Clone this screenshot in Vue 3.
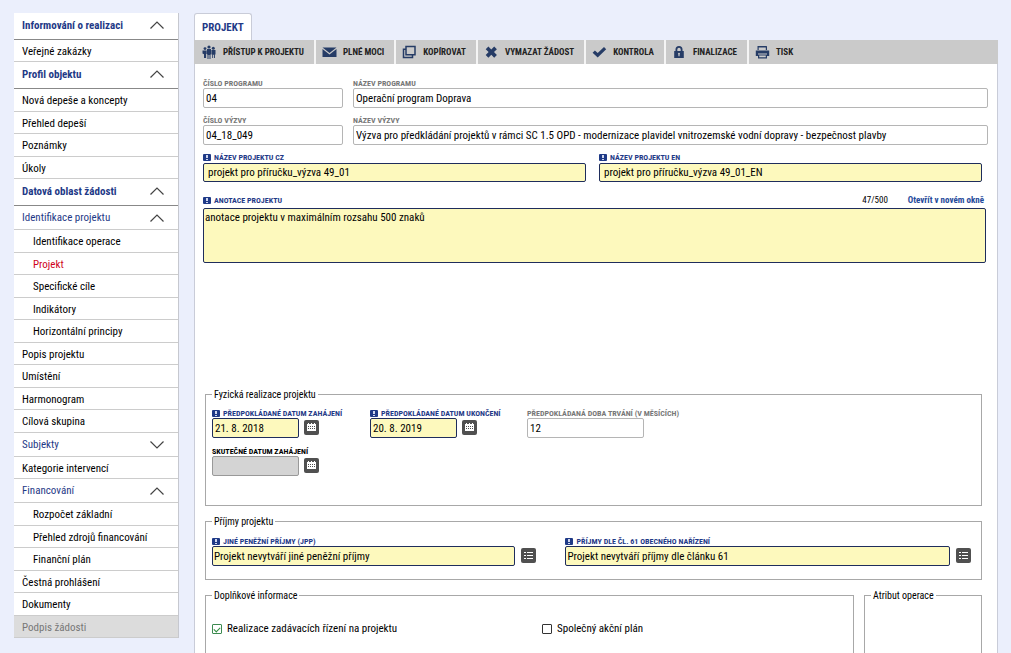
<script setup>
import { ref } from 'vue'

const menu = [
  { label: 'Informování o realizaci', kind: 'section', open: true },
  { label: 'Veřejné zakázky', kind: 'leaf' },
  { label: 'Profil objektu', kind: 'section', open: true },
  { label: 'Nová depeše a koncepty', kind: 'leaf' },
  { label: 'Přehled depeší', kind: 'leaf' },
  { label: 'Poznámky', kind: 'leaf' },
  { label: 'Úkoly', kind: 'leaf' },
  { label: 'Datová oblast žádosti', kind: 'section', open: true },
  { label: 'Identifikace projektu', kind: 'group', open: true },
  { label: 'Identifikace operace', kind: 'leaf', nested: true },
  { label: 'Projekt', kind: 'leaf', nested: true, active: true },
  { label: 'Specifické cíle', kind: 'leaf', nested: true },
  { label: 'Indikátory', kind: 'leaf', nested: true },
  { label: 'Horizontální principy', kind: 'leaf', nested: true },
  { label: 'Popis projektu', kind: 'leaf' },
  { label: 'Umístění', kind: 'leaf' },
  { label: 'Harmonogram', kind: 'leaf' },
  { label: 'Cílová skupina', kind: 'leaf' },
  { label: 'Subjekty', kind: 'group', open: false },
  { label: 'Kategorie intervencí', kind: 'leaf' },
  { label: 'Financování', kind: 'group', open: true },
  { label: 'Rozpočet základní', kind: 'leaf', nested: true },
  { label: 'Přehled zdrojů financování', kind: 'leaf', nested: true },
  { label: 'Finanční plán', kind: 'leaf', nested: true },
  { label: 'Čestná prohlášení', kind: 'leaf' },
  { label: 'Dokumenty', kind: 'leaf' },
  { label: 'Podpis žádosti', kind: 'leaf', disabled: true },
]

const tools = [
  { id: 'people', label: 'PŘÍSTUP K PROJEKTU' },
  { id: 'mail', label: 'PLNÉ MOCI' },
  { id: 'copy', label: 'KOPÍROVAT' },
  { id: 'cross', label: 'VYMAZAT ŽÁDOST' },
  { id: 'check', label: 'KONTROLA' },
  { id: 'lock', label: 'FINALIZACE' },
  { id: 'print', label: 'TISK' },
]

const calendarPath = 'M0 1h1V0h1v1h2V0h1v1h2V0h1v1h1v7H0zM1 3v1h1V3zM3 3v1h1V3zM5 3v1h1V3zM7 3v1h1V3zM1 5v1h1V5zM3 5v1h1V5zM5 5v1h1V5zM7 5v1h1V5z'
const listPath = 'M0 1h2v1H0zM3 1h6v1H3zM0 4h2v1H0zM3 4h6v1H3zM0 7h2v1H0zM3 7h6v1H3z'

const form = ref({
  programNo: '04',
  programName: 'Operační program Doprava',
  callNo: '04_18_049',
  callName: 'Výzva pro předkládání projektů v rámci SC 1.5 OPD - modernizace plavidel vnitrozemské vodní dopravy - bezpečnost plavby',
  nameCz: 'projekt pro příručku_výzva 49_01',
  nameEn: 'projekt pro příručku_výzva 49_01_EN',
  annotation: 'anotace projektu v maximálním rozsahu 500 znaků',
  start: '21. 8. 2018',
  end: '20. 8. 2019',
  duration: '12',
  realStart: '',
  income: 'Projekt nevytváří jiné peněžní příjmy',
  income61: 'Projekt nevytváří příjmy dle článku 61',
  tenders: true,
  actionPlan: false,
})
</script>

<template>
  <div class="page">
    <nav class="side">
      <ul class="menu">
        <li v-for="item in menu" :key="item.label" :class="[item.kind, { nested: item.nested, active: item.active, disabled: item.disabled }]">
          <a v-if="item.kind === 'leaf'" href="#">{{ item.label }}</a>
          <button v-else type="button" :aria-expanded="item.open">
            <span>{{ item.label }}</span>
            <svg width="14" height="8" viewBox="0 0 14 8" aria-hidden="true">
              <path :d="item.open ? 'M.5 7.5 7 1l6.5 6.5' : 'M.5.5 7 7 13.5.5'" />
            </svg>
          </button>
        </li>
      </ul>
    </nav>

    <main class="main">
      <div class="tabs"><a class="tab" href="#">PROJEKT</a></div>
      <div class="toolbar">
        <button v-for="t in tools" :key="t.id" type="button" class="tool">
          <svg v-if="t.id === 'people'" viewBox="0 0 15 14" aria-hidden="true">
            <circle cx="3" cy="3.6" r="1.4" /><circle cx="7" cy="2" r="1.6" /><circle cx="11.3" cy="3.2" r="1.5" />
            <path d="M.5 5.4h4.2V9h-.6v4H2V9.200L.5 8.600zM5 4h4v5.500h-.5V14h-1v-4h-1v4h-1V9.500H5zM9.400 5h4.100v4.500h-.6V13h-.9V9.800h-.9V13h-.9V9.500h-.8z" />
          </svg>
          <svg v-else-if="t.id === 'mail'" viewBox="0 0 15 14" aria-hidden="true">
            <path d="M.5 2.500h14L7.500 8zM.5 4 7.500 9.500l7-5.500v8H.5z" />
          </svg>
          <svg v-else-if="t.id === 'copy'" viewBox="0 0 15 14" class="stroke" aria-hidden="true">
            <path d="M4 1.500h9v8.200H4zM4 4.300H1.500v8.200h9v-2.800" />
          </svg>
          <svg v-else-if="t.id === 'cross'" viewBox="0 0 15 14" aria-hidden="true">
            <path d="m4.400 1.600 2.900 2.900 2.900-2.900 2.700 2.700L10 7.100l2.900 2.900-2.700 2.700-2.900-2.900-2.900 2.900L1.700 10l2.900-2.900-2.900-2.800z" />
          </svg>
          <svg v-else-if="t.id === 'check'" viewBox="0 0 15 14" aria-hidden="true">
            <path d="m.6 7.700 2.300-2.300 2.800 2.700L12 1.900l2.200 2.300-8.500 8.300z" />
          </svg>
          <svg v-else-if="t.id === 'lock'" viewBox="0 0 15 14" aria-hidden="true">
            <path fill-rule="evenodd" d="M3.500 6V4.500a3.500 3.500 0 0 1 7 0V6h1.300v7H2.200V6zM5.300 6h3.400V4.500a1.700 1.700 0 0 0-3.400 0zM7 7.700a1 1 0 0 0-.6 1.800v1.700h1.200V9.500A1 1 0 0 0 7 7.700z" />
          </svg>
          <svg v-else viewBox="0 0 15 14" aria-hidden="true">
            <path fill-rule="evenodd" d="M2.500 1h9l.5.500V5h-1.200V2.500H3.700V5H2.500zM.8 5.500h13.400V11H12V8.500H3V11H.8zM3 9.500h9v4H3zM4.200 10.500v1.700h6.600v-1.700z" />
          </svg>
          <span>{{ t.label }}</span>
        </button>
      </div>

      <form class="form" @submit.prevent>
        <div class="pair">
          <div class="field">
            <label for="programNo">ČÍSLO PROGRAMU</label>
            <input id="programNo" v-model="form.programNo" type="text" readonly>
          </div>
          <div class="field">
            <label for="programName">NÁZEV PROGRAMU</label>
            <input id="programName" v-model="form.programName" type="text" readonly>
          </div>
          <div class="field">
            <label for="callNo">ČÍSLO VÝZVY</label>
            <input id="callNo" v-model="form.callNo" type="text" readonly>
          </div>
          <div class="field">
            <label for="callName">NÁZEV VÝZVY</label>
            <input id="callName" v-model="form.callName" type="text" readonly>
          </div>
        </div>

        <div class="names">
          <div class="field required">
            <label for="nameCz"><i class="mark"></i>NÁZEV PROJEKTU CZ</label>
            <input id="nameCz" v-model="form.nameCz" type="text">
          </div>
          <div class="field required">
            <label for="nameEn"><i class="mark"></i>NÁZEV PROJEKTU EN</label>
            <input id="nameEn" v-model="form.nameEn" type="text">
          </div>
        </div>

        <div class="field required note">
          <div class="note-head">
            <label for="annotation"><i class="mark"></i>ANOTACE PROJEKTU</label>
            <span class="count">47/500</span>
            <a href="#">Otevřít v novém okně</a>
          </div>
          <textarea id="annotation" v-model="form.annotation"></textarea>
        </div>

        <div class="sets">
          <fieldset class="dates">
            <legend>Fyzická realizace projektu</legend>
            <div class="date-grid">
              <div class="field required">
                <label for="start"><i class="mark"></i>PŘEDPOKLÁDANÉ DATUM ZAHÁJENÍ</label>
                <div class="with-button">
                  <input id="start" v-model="form.start" type="text">
                  <button type="button" class="pick" aria-label="Kalendář">
                    <svg viewBox="0 0 9 9" aria-hidden="true"><path fill-rule="evenodd" :d="calendarPath" /></svg>
                  </button>
                </div>
              </div>
              <div class="field required">
                <label for="end"><i class="mark"></i>PŘEDPOKLÁDANÉ DATUM UKONČENÍ</label>
                <div class="with-button">
                  <input id="end" v-model="form.end" type="text">
                  <button type="button" class="pick" aria-label="Kalendář">
                    <svg viewBox="0 0 9 9" aria-hidden="true"><path fill-rule="evenodd" :d="calendarPath" /></svg>
                  </button>
                </div>
              </div>
              <div class="field duration">
                <label for="duration">PŘEDPOKLÁDANÁ DOBA TRVÁNÍ (V MĚSÍCÍCH)</label>
                <input id="duration" v-model="form.duration" type="text" readonly>
              </div>
              <div class="field off">
                <label for="realStart">SKUTEČNÉ DATUM ZAHÁJENÍ</label>
                <div class="with-button">
                  <input id="realStart" v-model="form.realStart" type="text" disabled>
                  <button type="button" class="pick" aria-label="Kalendář">
                    <svg viewBox="0 0 9 9" aria-hidden="true"><path fill-rule="evenodd" :d="calendarPath" /></svg>
                  </button>
                </div>
              </div>
            </div>
          </fieldset>

          <fieldset class="incomes">
            <legend>Příjmy projektu</legend>
            <div class="income-grid">
              <div class="field required">
                <label for="income"><i class="mark"></i>JINÉ PENĚŽNÍ PŘÍJMY (JPP)</label>
                <div class="with-button">
                  <input id="income" v-model="form.income" type="text">
                  <button type="button" class="pick" aria-label="Vybrat ze seznamu">
                    <svg viewBox="0 0 9 9" aria-hidden="true"><path :d="listPath" /></svg>
                  </button>
                </div>
              </div>
              <div class="field required">
                <label for="income61"><i class="mark"></i>PŘÍJMY DLE ČL. 61 OBECNÉHO NAŘÍZENÍ</label>
                <div class="with-button">
                  <input id="income61" v-model="form.income61" type="text">
                  <button type="button" class="pick" aria-label="Vybrat ze seznamu">
                    <svg viewBox="0 0 9 9" aria-hidden="true"><path :d="listPath" /></svg>
                  </button>
                </div>
              </div>
            </div>
          </fieldset>

          <div class="bottom">
            <fieldset>
              <legend>Doplňkové informace</legend>
              <div class="checks">
                <label><input v-model="form.tenders" type="checkbox">Realizace zadávacích řízení na projektu</label>
                <label><input v-model="form.actionPlan" type="checkbox">Společný akční plán</label>
              </div>
            </fieldset>
            <fieldset>
              <legend>Atribut operace</legend>
            </fieldset>
          </div>
        </div>
      </form>
    </main>
  </div>
</template>

<style>
body {
  margin: 0;
  background: #ebeffc;
}
</style>

<style scoped>
.page,
.page * {
  box-sizing: border-box;
}
.page {
  display: flex;
  gap: 15px;
  height: 100vh;
  overflow: hidden;
  padding: 13px 13px 0 14px;
  background: #ebeffc;
  color: #000;
  font-family: "Roboto Condensed", "Liberation Sans Narrow", Roboto, sans-serif;
  font-size: 11px;
  line-height: 13px;
}
button,
input,
textarea {
  font: inherit;
  margin: 0;
}
a {
  color: inherit;
  text-decoration: none;
}

.side {
  flex: 0 0 165px;
}
.menu {
  margin: 0;
  padding: 0;
  list-style: none;
  background: #fff;
  border-right: 1px solid #c6c8cf;
}
.menu li {
  display: flex;
  border-bottom: 1px solid #ccc;
}
.menu a,
.menu button {
  flex: 1;
  display: flex;
  align-items: center;
  padding: 0 14px 0 8px;
  white-space: nowrap;
}
.menu a {
  padding-top: 1px;
}
.menu button {
  justify-content: space-between;
  border: 0;
  background: none;
  color: #1f3a87;
}
.menu svg {
  fill: none;
  stroke: #444;
  stroke-width: 1.2;
}
.menu .leaf {
  height: 22px;
}
.menu .leaf:nth-child(even of .leaf) {
  height: 23px;
}
.menu .section {
  height: 27px;
  border-bottom-color: #888;
}
.menu .section button {
  padding-bottom: 2px;
  font-weight: 700;
}
.menu .group {
  height: 24px;
}
.menu .nested a {
  padding-left: 19px;
}
.menu .active {
  color: #d0021b;
}
.menu .disabled {
  background: #dcdcdc;
  color: #777;
}

.main {
  flex: 1;
  min-width: 0;
  display: flex;
  flex-direction: column;
}
.tabs {
  display: flex;
}
.tab {
  height: 27px;
  padding: 7px 7px 0;
  border: 1px solid #c9ccd8;
  border-bottom: 0;
  border-radius: 3px 3px 0 0;
  background: #fff;
  color: #1f3a87;
  font-weight: 700;
}
.toolbar {
  display: flex;
  height: 24px;
  background: #cacaca;
}
.tool {
  display: flex;
  align-items: center;
  gap: 6px;
  padding: 0 10px 0 6px;
  border: 0;
  border-right: 2px solid #f4f4f4;
  background: none;
  color: #222;
  font-size: 9px;
  font-weight: 700;
  white-space: nowrap;
}
.tool:first-child {
  padding-left: 8px;
}
.tool:last-child {
  border-right: 0;
}
.tool svg {
  width: 15px;
  height: 14px;
  fill: #263c66;
}
.tool .stroke {
  fill: none;
  stroke: #263c66;
  stroke-width: 1.5;
}

.form {
  flex: 1;
  min-height: 0;
  display: flex;
  flex-direction: column;
  padding: 14px 9px 0 8px;
  border: solid #c9ccd8;
  border-width: 0 1px;
  background: #fff;
}
.field {
  min-width: 0;
}
.field label {
  display: flex;
  align-items: center;
  height: 10px;
  padding-top: 1px;
  color: #777;
  font-size: 8px;
  font-weight: 700;
  line-height: 10px;
  white-space: nowrap;
}
.field input {
  display: block;
  width: 100%;
  height: 20px;
  padding: 0 2px;
  border: 1px solid #b5b5b5;
  border-radius: 2px;
  background: #fff;
  color: #000;
}
.required label {
  color: #1f3a87;
}
.required input,
.required textarea {
  border-color: #1f2d5c;
  background: #fdf9bd;
}
.mark {
  position: relative;
  width: 8px;
  height: 7px;
  margin-right: 3px;
  border-radius: 1px;
  background: #1f3a87;
}
.mark::before,
.mark::after {
  content: "";
  position: absolute;
  left: 3px;
  width: 2px;
  background: #cfd6ee;
}
.mark::before {
  top: 1px;
  height: 3px;
}
.mark::after {
  top: 5px;
  height: 1px;
}
.pair {
  display: grid;
  grid-template-columns: 140px 1fr;
  gap: 7px 10px;
}
.names {
  display: grid;
  grid-template-columns: 1fr 1fr;
  gap: 13px;
  margin: 7px 6px 0 0;
}
.names input {
  height: 19px;
  margin-top: 1px;
  padding: 0 4px;
}
.note {
  margin: 13px 2px 0 0;
}
.note-head {
  display: flex;
  align-items: center;
  height: 10px;
  margin-bottom: 3px;
  padding-right: 2px;
  font-size: 9px;
}
.note-head .count {
  margin-left: auto;
  margin-right: 20px;
}
.note-head a {
  color: #1f4a9a;
  font-weight: 700;
}
textarea {
  display: block;
  width: 100%;
  height: 55px;
  padding: 2px 1px;
  border: 1px solid;
  border-radius: 2px;
  color: #000;
  resize: none;
}

.sets {
  flex: 1;
  min-height: 0;
  display: flex;
  flex-direction: column;
  gap: 9px;
  margin: 125px 6px 0 2px;
}
fieldset {
  min-width: 0;
  margin: 0;
  padding: 0 10px 0 6px;
  border: 1px solid #a8a8a8;
}
legend {
  padding: 0 2px;
  font-size: 10px;
  line-height: 13px;
}
.dates {
  padding-bottom: 29px;
}
.date-grid {
  display: grid;
  grid-template-columns: 158px 157px 1fr;
  gap: 8px 0;
  padding-top: 7px;
}
.with-button {
  display: flex;
  align-items: flex-start;
  gap: 5px;
}
.with-button input {
  flex: 1;
  min-width: 0;
}
.date-grid .with-button input {
  flex: 0 0 87px;
}
.duration input {
  width: 117px;
}
.off label {
  color: #000;
}
.off input {
  border-color: #999;
  background: #d4d4d4;
}
.pick {
  flex: none;
  display: flex;
  align-items: center;
  justify-content: center;
  width: 15px;
  height: 15px;
  margin-top: 2px;
  padding: 0;
  border: 0;
  border-radius: 2px;
  background: #505050;
}
.pick svg {
  width: 9px;
  height: 9px;
  fill: #fff;
}
.incomes {
  padding-bottom: 13px;
}
.income-grid {
  display: grid;
  grid-template-columns: 4fr 5fr;
  gap: 29px;
  padding-top: 8px;
}
.income-grid .with-button {
  gap: 6px;
}
.income-grid input {
  padding: 0 1px;
}
.bottom {
  flex: 1;
  display: grid;
  grid-template-columns: 1fr 118px;
  gap: 10px;
  margin-bottom: -10px;
}
.checks {
  display: grid;
  grid-template-columns: 330px 1fr;
  padding-top: 20px;
}
.checks label {
  display: flex;
  align-items: center;
  gap: 5px;
}
.checks input {
  appearance: none;
  display: grid;
  place-items: center;
  width: 10px;
  height: 10px;
  border: 1px solid #333;
  border-radius: 1px;
  background: #fff;
}
.checks input:checked {
  border-color: #3c8a50;
}
.checks input:checked::before {
  content: "";
  width: 5px;
  height: 3px;
  border: solid #2e8b3d;
  border-width: 0 0 1px 1px;
  transform: rotate(-45deg);
}
</style>
